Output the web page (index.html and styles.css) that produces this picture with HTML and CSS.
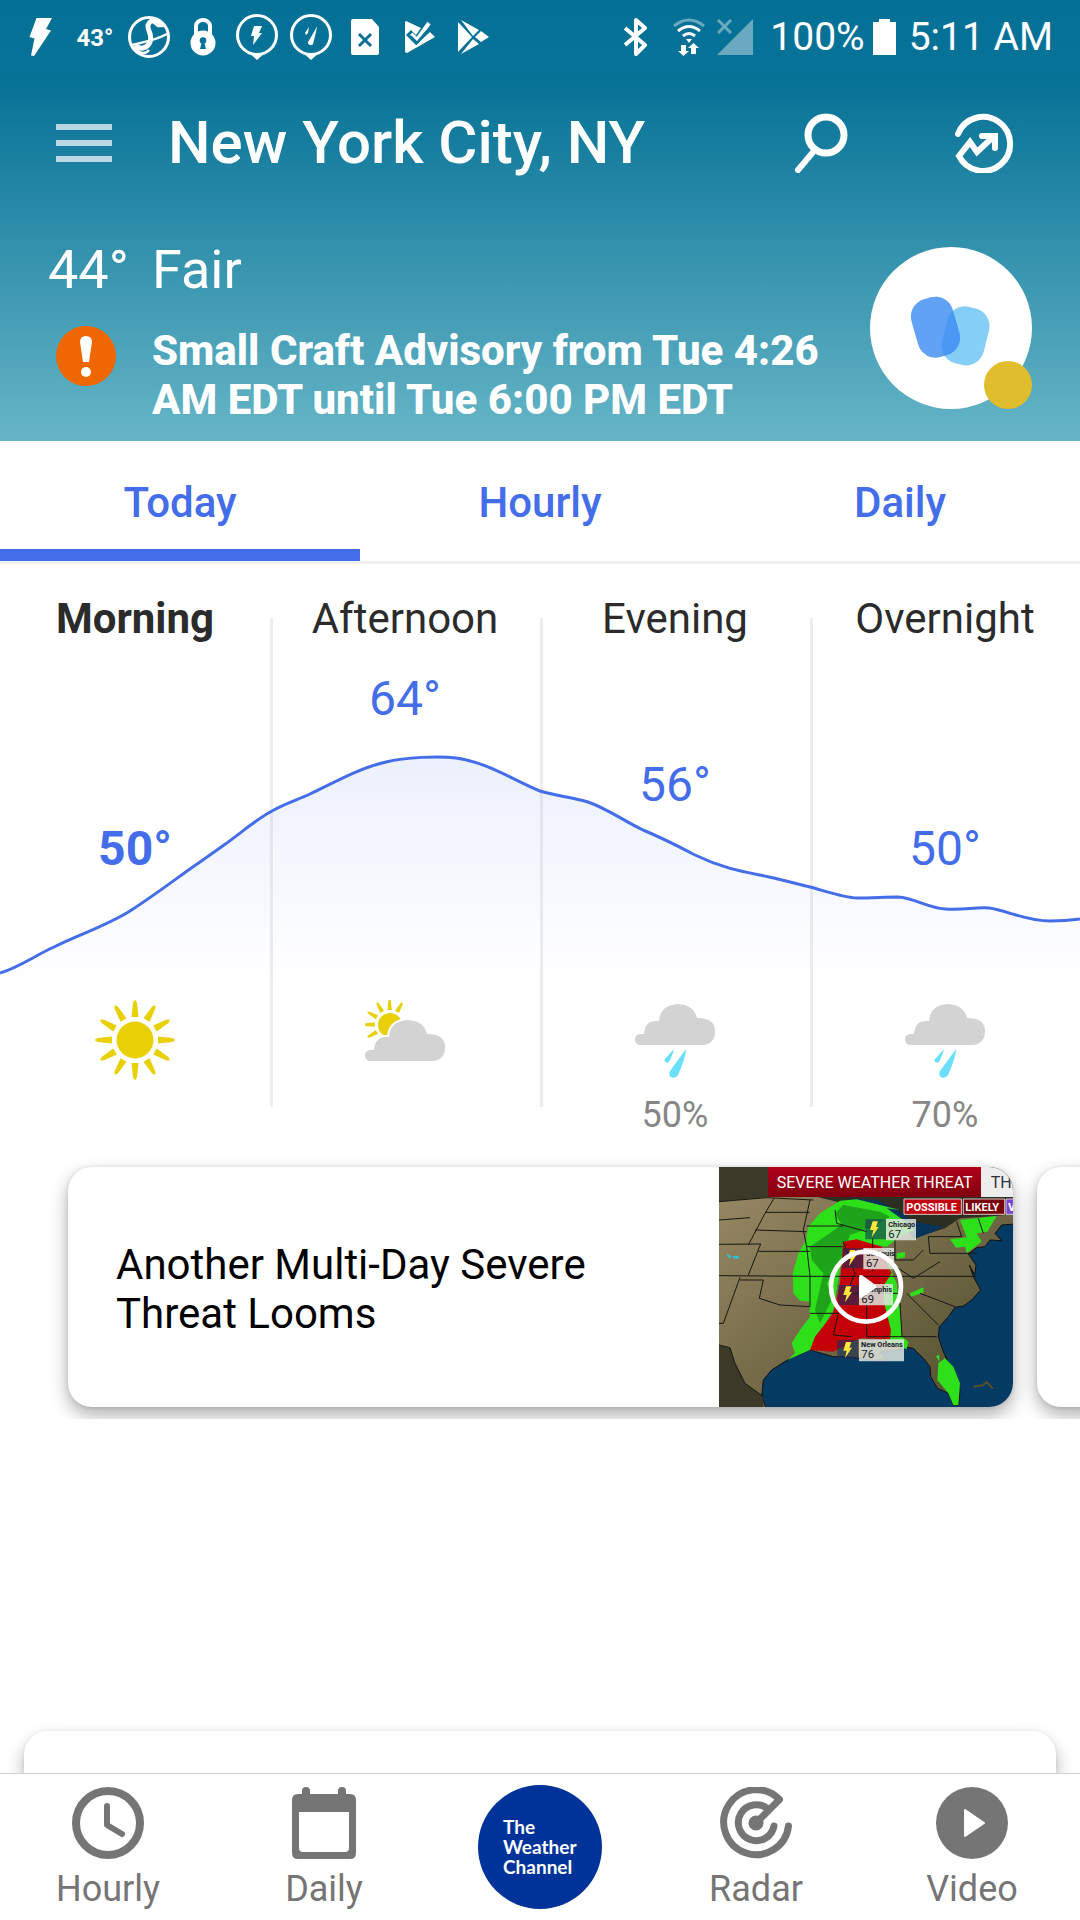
FILE: index.html
```html
<!DOCTYPE html>
<html lang="en">
<head>
<meta charset="utf-8">
<meta name="viewport" content="width=device-width, initial-scale=1">
<title>New York City, NY</title>
<link rel="stylesheet" href="styles.css">
</head>
<body>
<header class="hero">
  <div class="status">
    <div class="status-left">
      <svg class="slot" viewBox="0 0 54 72" fill="#fff"><path d="M22.500 18H38L32 29L37 30.500L20 56L17 55.500L20.500 38.500L15.500 37Z"/></svg>
      <span class="slot status-temp">43°</span>
      <svg class="slot" viewBox="0 0 54 72" fill="none" stroke="#fff"><circle cx="27" cy="37" r="19.500" stroke-width="3"/><path d="M38 26c2-6-10-8-12-1c-1 6 5 9 2 17c-3 7-11 8-14 3" stroke-width="5"/><path d="M31 22l5 4l7 0M10 45c11-3 22-4 35-11M13 46c3 8 10 9 14 4" stroke-width="2.500"/></svg>
      <svg class="slot" viewBox="0 0 54 72"><path d="M20 35V26a7 6 0 0 1 14 0v9" fill="none" stroke="#fff" stroke-width="4"/><circle cx="27" cy="43" r="12.500" fill="#fff"/><circle cx="27" cy="40.500" r="3.300" fill="#067196"/><path d="M26 41h2l2 8h-6z" fill="#067196"/></svg>
      <svg class="slot" viewBox="0 0 54 72"><circle cx="27" cy="35" r="19.500" fill="none" stroke="#fff" stroke-width="3"/><path d="M18 52q9 4 18 0l-9 8z" fill="#fff"/><path d="M24 26h8l-3 7h3l-9 12l1-9h-3z" fill="#fff"/></svg>
      <svg class="slot" viewBox="0 0 54 72"><circle cx="27" cy="35" r="19.500" fill="none" stroke="#fff" stroke-width="3"/><path d="M18 52q9 4 18 0l-9 8z" fill="#fff"/><path d="M33 26l-1 6l-3 12c-1 2-6 1-5-2l6-10zM25 27l-1 6l-2 2l-1-2z" fill="#fff"/></svg>
      <svg class="slot" viewBox="0 0 54 72"><path d="M15 19h19l7 8v26q0 2-2 2H15q-2 0-2-2V21q0-2 2-2z" fill="#fff"/><path d="M21 34l12 12M33 34l-12 12" stroke="#067196" stroke-width="3"/></svg>
      <svg class="slot" viewBox="0 0 54 72"><path d="M14 21l15 7l-5 7l-5-5l-5 5l10 10l14-13l5 5L15 53q-2 0-2-2V22z" fill="#fff"/><path d="M19 34l6 6l12-17" fill="none" stroke="#fff" stroke-width="4"/><path d="M18 36l7 7l10-12" fill="none" stroke="#067196" stroke-width="2.500"/></svg>
      <svg class="slot" viewBox="0 0 54 72" fill="#fff"><path d="M12 22l14 15l-14 15zM15 20l18 10l-6 6zM35 31l8 6l-8 5l-6-5zM27 39l6 5l-18 10z"/></svg>
    </div>
    <div class="status-right">
      <svg width="23" height="38" viewBox="0 0 23 38" fill="none" stroke="#fff" stroke-width="4" stroke-linejoin="round"><path d="M1 10l20 17l-9 9V2l9 8L1 27"/></svg>
      <svg class="wifi" width="32" height="38" viewBox="0 0 32 38" fill="none" stroke="#fff" stroke-width="3"><path d="M1 8q15-12 30 0" opacity=".4"/><path d="M5 13q11-9 22 0M10 18q6-5 12 0"/><path d="M13 21h6l-3 4z" fill="#fff" stroke="none"/><path d="M8 27h5v6h3l-5.500 5L5 33h3zM18 36h5v-6h3l-5.500-5L15 30h3z" fill="#fff" stroke="none"/></svg>
      <svg class="signal" width="36" height="36" viewBox="0 0 36 36"><path d="M36 0v36H0z" fill="#6ba9c0"/><path d="M1 1l13 13M14 1L1 14" stroke="#6ba9c0" stroke-width="3"/></svg>
      <span class="battery-text">100%</span>
      <svg class="battery" width="23" height="36" viewBox="0 0 23 36" fill="#fff"><path d="M0 3h6V0h11v3h6v33H0z"/></svg>
      <span class="clock">5:11 AM</span>
    </div>
  </div>

  <div class="toolbar">
    <button class="icon-button menu" aria-label="Menu"><span></span><span></span><span></span></button>
    <h1 class="place">New York City, NY</h1>
    <button class="icon-button" aria-label="Search"><svg width="60" height="60" viewBox="0 0 60 60" fill="none" stroke="#fff" stroke-linecap="round"><circle cx="36" cy="22" r="18" stroke-width="7"/><path d="M24 38L8 57" stroke-width="6"/></svg></button>
    <button class="icon-button" aria-label="Trending"><svg width="60" height="60" viewBox="0 0 60 60" fill="none" stroke="#fff" stroke-width="6" stroke-linecap="round"><path d="M4 21A27 27 0 1 1 5 43L16 29L23 39L39 24M28 23H41V35"/></svg></button>
  </div>

  <section class="conditions">
    <p class="now">44°</p>
    <p class="sky">Fair</p>
    <svg class="alert-icon" width="60" height="60" viewBox="0 0 60 60"><circle cx="30" cy="30" r="30" fill="#ee6700"/><path d="M24 16q0-6 6-6t6 6l-3 20h-6z" fill="#fff"/><circle cx="30" cy="46" r="5" fill="#fff"/></svg>
    <a class="alert" href="#alert">Small Craft Advisory from Tue 4:26 AM EDT until Tue 6:00 PM EDT</a>
    <button class="assistant" aria-label="Assistant"><svg width="162" height="162" viewBox="0 0 162 162"><circle cx="81" cy="81" r="81" fill="#fff"/><rect x="74" y="60" width="43" height="58" rx="18" fill="#85cef6" transform="rotate(14 96 89)"/><rect x="44" y="50" width="43" height="60" rx="18" fill="#3b8bf4" fill-opacity=".8" transform="rotate(-16 66 80)"/><circle cx="138" cy="138" r="24" fill="#dfbd2c"/></svg></button>
  </section>
</header>

<nav class="tabs" aria-label="Forecast range">
  <button class="tab tab-active">Today</button>
  <button class="tab">Hourly</button>
  <button class="tab">Daily</button>
</nav>

<main>
  <section class="forecast" aria-label="Today">
    <svg class="curve" viewBox="0 0 1080 576" preserveAspectRatio="none" aria-hidden="true">
      <defs>
        <linearGradient id="fade" x1="0" y1="190" x2="0" y2="425" gradientUnits="userSpaceOnUse"><stop offset="0" stop-color="#446dea" stop-opacity=".1"/><stop offset="1" stop-color="#446dea" stop-opacity="0"/></linearGradient>
      </defs>
      <path fill="url(#fade)" d="M0 409C18 404 36 391 54 383C78 371 106 362 130 347C158 329 178 313 200 298L224 281C240 270 255 256 272 247C284 240 297 236 310 230C335 218 362 203 386 198C405 193 440 192 456 194C487 198 517 218 540 227C556 232 573 233 588 238C606 244 624 257 643 266C660 273 676 281 695 291C730 308 755 309 778 315L810 323C825 327 845 334 857 334C872 334 885 333 898 333C915 334 930 345 946 345C965 346 975 343 989 344C1006 346 1025 357 1050 357Q1065 357 1080 355V425H0Z"/>
      <path class="curve-line" d="M0 409C18 404 36 391 54 383C78 371 106 362 130 347C158 329 178 313 200 298L224 281C240 270 255 256 272 247C284 240 297 236 310 230C335 218 362 203 386 198C405 193 440 192 456 194C487 198 517 218 540 227C556 232 573 233 588 238C606 244 624 257 643 266C660 273 676 281 695 291C730 308 755 309 778 315L810 323C825 327 845 334 857 334C872 334 885 333 898 333C915 334 930 345 946 345C965 346 975 343 989 344C1006 346 1025 357 1050 357Q1065 357 1080 355"/>
    </svg>
    <div class="period period-current">
      <h2>Morning</h2>
      <p class="temp" style="margin-top: 178px">50°</p>
      <svg class="weather" width="80" height="80" viewBox="0 0 80 80" fill="#e8d007"><defs><path id="ray" d="M36.500 17L38 3Q40-3 42 3L43.500 17Z"/></defs><circle cx="40" cy="40" r="18.500"/><use href="#ray"/><use href="#ray" transform="rotate(30 40 40)"/><use href="#ray" transform="rotate(60 40 40)"/><use href="#ray" transform="rotate(90 40 40)"/><use href="#ray" transform="rotate(120 40 40)"/><use href="#ray" transform="rotate(150 40 40)"/><use href="#ray" transform="rotate(180 40 40)"/><use href="#ray" transform="rotate(210 40 40)"/><use href="#ray" transform="rotate(240 40 40)"/><use href="#ray" transform="rotate(270 40 40)"/><use href="#ray" transform="rotate(300 40 40)"/><use href="#ray" transform="rotate(330 40 40)"/></svg>
      <p class="chance"></p>
    </div>
    <div class="period">
      <h2>Afternoon</h2>
      <p class="temp" style="margin-top: 28px">64°</p>
      <svg class="weather" width="80" height="80" viewBox="0 0 80 80"><defs><path id="cloud" d="M5 41a5 5.500 0 0 1 0-11h4q1-13 12-13h3q1-16 19-17q16 1 19 14q18 0 18 13t-12 14z"/></defs><g fill="#e8d007"><circle cx="25" cy="25" r="12"/><g transform="translate(-1 -1) scale(.64)"><use href="#ray"/><use href="#ray" transform="rotate(30 40 40)"/><use href="#ray" transform="rotate(240 40 40)"/><use href="#ray" transform="rotate(270 40 40)"/><use href="#ray" transform="rotate(300 40 40)"/><use href="#ray" transform="rotate(330 40 40)"/></g></g><g transform="translate(0 20)"><use href="#cloud" fill="#d3d3d3" stroke="#fff" stroke-width="4"/><use href="#cloud" fill="#d3d3d3"/></g></svg>
      <p class="chance"></p>
    </div>
    <div class="period">
      <h2>Evening</h2>
      <p class="temp" style="margin-top: 114px">56°</p>
      <svg class="weather" width="80" height="80" viewBox="0 0 80 80"><use href="#cloud" fill="#d3d3d3" y="4"/><path id="rain" d="M51 49q0 8-8 26c-3 5-11 3-8-4zM39 49q-1 5-4 11c-2 5-7 2-5-1z" fill="#69dffc"/></svg>
      <p class="chance">50%</p>
    </div>
    <div class="period">
      <h2>Overnight</h2>
      <p class="temp" style="margin-top: 178px">50°</p>
      <svg class="weather" width="80" height="80" viewBox="0 0 80 80"><use href="#cloud" fill="#d3d3d3" y="4"/><use href="#rain"/></svg>
      <p class="chance">70%</p>
    </div>
  </section>

  <section class="stories" aria-label="Top stories">
    <a class="story" href="#story">
      <span class="story-title">Another Multi-Day Severe Threat Looms</span>
      <svg class="story-map" viewBox="57 51 882 720" preserveAspectRatio="xMidYMid slice" role="img" aria-label="Severe weather threat map">
        <defs>
          <linearGradient id="land" x1="0" y1="0" x2="1" y2="1"><stop offset="0" stop-color="#9c8c68"/><stop offset=".5" stop-color="#756b49"/><stop offset="1" stop-color="#4c4a2a"/></linearGradient>
          <linearGradient id="banner" x1="0" y1="0" x2="0" y2="1"><stop offset="0" stop-color="#b3001a"/><stop offset="1" stop-color="#80000f"/></linearGradient>
          <path id="flash" d="M10 0h16l-6 17h8L7 48l5-22H2z" fill="#ffe63b"/>
        </defs>
        <path fill="#053a63" d="M57 51h882v720H57z"/>
        <path fill="url(#land)" stroke="#111" stroke-width="3" d="M50 40H945V222L905 225L885 250L905 272L870 270L855 290L830 293L805 312L828 345L824 375L808 345L820 380L842 420L815 450L790 468L765 472L745 500L718 530L715 560L728 600L745 640L770 680L780 720L776 765L760 765L745 730L712 715L692 680L690 650L670 625L640 595L605 590L600 600L540 605L560 630L520 630L440 620L400 620L330 600L270 625L215 660L190 690L185 740L200 780H50Z"/>
        <path fill="#3d3929" d="M57 585L90 593L105 640L135 700L190 740V771H57zM57 51H210V141L57 155z"/>
        <path fill="#2c2e22" d="M350 140H939V190L900 197L780 205L735 235L640 265L590 200z"/>
        <path fill="#08345a" d="M440 145L530 150L600 185L640 215L730 230L700 245L640 268L620 235L585 195L540 190L520 165zM516 205L545 185L550 250L525 268L505 240z"/>
        <g fill="#2ee01a"><path d="M470 148L420 152L360 190L325 230L318 270L295 310L278 370L280 430L300 452L328 455L330 500L300 540L275 580L285 610L262 630L330 600L400 480L430 300L440 270L560 290L600 260L645 240L610 210L560 175L600 180Z"/><path d="M560 330L590 400L600 480L606 560L625 575L620 597L560 580L550 440Z"/><path d="M715 640L735 625L760 650L780 700L775 765L760 765L745 730L712 690ZM708 618l10-4v22zM780 210L890 198L862 245L830 250L845 275L800 310L795 290L768 293L750 268L800 262ZM590 310l25-4v16l-25 4zM630 430l40-18v16l-38 12z"/></g>
        <path fill="#1fa31b" d="M430 165L540 185L570 200L505 235L450 255L425 320L380 400L400 440L360 520L345 480L370 370L335 330L330 290L425 225L405 190Z"/>
        <path fill="#c40009" d="M430 275L470 268L545 290L560 340L575 370L555 400L550 450L573 540L570 568L480 565L400 605L330 600L345 560L400 490L420 400Z"/>
        <g fill="none" stroke="#171712" stroke-width="3"><path d="M222 145L195 190L145 285M57 155L200 143L340 150M57 210L150 203M195 187H330M165 240L320 245M320 228H430M57 283L182 282L145 375M175 304H330M57 377L330 379H830M120 382L70 520H57M120 390H190L178 445L240 465L330 470V379L320 290L310 240L330 150M320 290H430M330 490H415L400 555L455 560M405 180L410 220L500 245M430 275L465 370L440 430H610M518 265V365M585 265V330M500 400V560H710M580 345L640 385L720 335M685 260L690 310H830M585 330L640 330L670 300M770 215L785 260H685M600 460L606 560M620 430L715 525M660 430L765 470M57 585L90 593L105 640L135 700L190 740M835 205L850 250"/></g>
        <path d="M80 310l12 8v8l-8-4zM98 318h18v8h-14z" fill="#23c5dd"/>
        <path d="M820 710l28-4 12-10 18 20" fill="none" stroke="#57502d" stroke-width="6"/>
        <path fill="#16305a" fill-opacity=".6" d="M496 208h62v60h-62zM428 295h62v60h-62zM415 405h62v60h-62zM412 570h62v60h-62z"/>
        <g fill="#dfe5df" fill-opacity=".85"><path d="M558 207h90v64h-90zM490 294h92v64h-92zM477 402h102v64H477zM477 568h135v66H477z"/></g>
        <use href="#flash" x="508" y="214"/><use href="#flash" x="440" y="300"/><use href="#flash" x="428" y="409"/><use href="#flash" x="428" y="576"/>
        <g class="city"><text x="565" y="231">Chicago</text><text x="498" y="319">St. Louis</text><text x="484" y="426">Memphis</text><text x="483" y="592">New Orleans</text></g>
        <g class="degrees"><text x="565" y="264">67</text><text x="498" y="351">67</text><text x="484" y="459">69</text><text x="484" y="625">76</text></g>
        <path fill="url(#banner)" d="M204 51h640v90H204z"/><path fill="#ededed" d="M843 51h100v90H843z"/>
        <text class="banner" x="230" y="115">SEVERE WEATHER THREAT</text>
        <text class="banner banner-day" x="872" y="115">THU</text>
        <g stroke="#d8c8c8" stroke-width="3"><path fill="#c2000d" d="M612 147h172v46H612z"/><path fill="#790009" d="M790 147h124v46H790z"/><path fill="#7747d8" d="M918 147h40v46h-40z"/></g>
        <g class="legend"><text x="619" y="183">POSSIBLE</text><text x="796" y="183">LIKELY</text><text x="924" y="183">V</text></g>
        <circle cx="498" cy="410" r="105" fill="none" stroke="#fff" stroke-width="14"/>
        <path fill="#fff" d="M477 382q0-10 9-6l40 28q6 6 0 11l-40 28q-9 4-9-6z"/>
      </svg>
    </a>
    <div class="story" aria-hidden="true"></div>
  </section>
  <div class="ad-slot"></div>
  <section class="next-card"></section>
</main>

<nav class="bottom" aria-label="Sections">
  <a href="#hourly"><svg width="72" height="72" viewBox="0 0 72 72" fill="none" stroke="#757575" stroke-linecap="round" stroke-linejoin="round"><circle cx="36" cy="36" r="32" stroke-width="8"/><path d="M35 19V38L50 47" stroke-width="6"/></svg>Hourly</a>
  <a href="#daily"><svg width="72" height="72" viewBox="0 0 72 72"><path fill="#757575" fill-rule="evenodd" d="M10 7h4V4a4 4 0 0 1 8 0v3h28V4a4 4 0 0 1 8 0v3h4q6 0 6 6v53q0 6-6 6H10q-6 0-6-6V13q0-6 6-6zM11 25v36q0 4 4 4h42q4 0 4-4V25z"/></svg>Daily</a>
  <a class="brand" href="#home"><span class="logo">The<br>Weather<br>Channel</span></a>
  <a href="#radar"><svg width="72" height="72" viewBox="0 0 72 72" fill="none" stroke="#757575" stroke-width="7" stroke-linecap="round" stroke-linejoin="round"><path d="M36 36L59.500 12.500A32.500 32.500 0 1 0 68.500 39M48 22A18 18 0 1 0 54 39"/><circle cx="36" cy="36" r="4"/></svg>Radar</a>
  <a href="#video"><svg width="72" height="72" viewBox="0 0 72 72"><circle cx="36" cy="36" r="36" fill="#757575"/><path fill="#fff" stroke="#fff" stroke-width="2" stroke-linejoin="round" d="M29 23V49L48 36z"/></svg>Video</a>
</nav>
</body>
</html>
```
FILE: styles.css
```css
* {
  box-sizing: border-box;
}

body {
  margin: 0;
  min-height: 100vh;
  display: flex;
  flex-direction: column;
  background: #fff;
  color: #000;
  font-family: Roboto, "Liberation Sans", sans-serif;
  font-size: 42px;
  line-height: 49px;
}

h1, h2, p {
  margin: 0;
  font: inherit;
}

button {
  padding: 0;
  border: 0;
  background: none;
  font: inherit;
  color: inherit;
}

a {
  color: inherit;
  text-decoration: none;
}

svg {
  display: block;
}

/* Header */
.hero {
  color: #fff;
  background: linear-gradient(#047095 72px, #66b5c6);
}

.status {
  display: flex;
  justify-content: space-between;
  height: 72px;
  padding: 0 27px 0 14px;
  background: linear-gradient(#047095, #087398);
}

.status-left,
.status-right {
  display: flex;
  align-items: center;
}

.slot {
  width: 54px;
  height: 72px;
}

.status-temp {
  font-size: 24px;
  font-weight: 700;
  line-height: 76px;
  text-align: center;
}

.status-right {
  font-size: 39px;
  padding-top: 2px;
}

.wifi {
  margin-left: 26px;
}

.signal {
  margin: 0 17px 0 12px;
}

.battery {
  margin: 0 13px 0 8px;
}

.toolbar {
  display: flex;
  align-items: center;
  height: 142px;
  padding: 0 66px 0 56px;
}

.menu {
  display: flex;
  flex-direction: column;
  gap: 10px;
  width: 56px;
  margin-right: 56px;
}

.menu span {
  height: 6px;
  background: rgba(255, 255, 255, .7);
}

.place {
  flex: 1;
  font-size: 60px;
  font-weight: 500;
  line-height: 70px;
}

.icon-button + .icon-button {
  margin-left: 104px;
}

.conditions {
  display: grid;
  grid-template-columns: 104px 1fr 162px;
  row-gap: 24px;
  padding: 24px 48px 17px;
}

.now,
.sky {
  font-size: 54px;
  line-height: 64px;
}

.alert-icon {
  grid-row: 2;
  margin-left: 8px;
}

.alert {
  grid-row: 2;
  font-weight: 800;
}

.assistant {
  grid-column: 3;
  grid-row: 1 / 3;
  align-self: start;
  margin-top: 9px;
}

/* Range tabs */
.tabs {
  display: flex;
  border-bottom: 3px solid #f0f0f0;
}

.tab {
  flex: 1;
  padding: 37px 0 22px;
  border-bottom: 12px solid transparent;
  font-weight: 500;
  color: #446dea;
}

.tab-active {
  border-color: #446dea;
}

main {
  flex: 1;
  display: flex;
  flex-direction: column;
  overflow: hidden;
}

/* Day-part forecast */
.forecast {
  position: relative;
  display: grid;
  grid-template-columns: repeat(4, 1fr);
}

.curve {
  position: absolute;
  inset: 0;
  width: 100%;
  height: 100%;
}

.curve-line {
  fill: none;
  stroke: #446dea;
  stroke-width: 3px;
}

.period {
  display: flex;
  flex-direction: column;
  align-items: center;
  height: 576px;
  padding: 30px 0 4px;
  color: #2b2b2b;
}

.period + .period {
  background: linear-gradient(#ededed, #ededed) 0 54px / 3px 489px no-repeat;
}

.period-current {
  font-weight: 700;
}

.temp {
  font-size: 48px;
  line-height: 56px;
  color: #446dea;
}

.weather {
  margin-top: auto;
}

.chance {
  height: 42px;
  margin-top: 14px;
  font-size: 36px;
  line-height: 42px;
  color: #868686;
}

/* Story carousel */
.stories {
  display: flex;
  gap: 24px;
  padding: 27px 0 12px 68px;
  overflow: hidden;
}

.story {
  flex: 0 0 calc(100% - 67px);
  display: flex;
  align-items: center;
  height: 240px;
  border-radius: 24px;
  background: #fff;
  box-shadow: 0 8px 18px rgba(0, 0, 0, .32), 0 0 4px rgba(0, 0, 0, .1);
}

.story-title {
  flex: 1;
  padding: 4px 120px 0 48px;
}

.story-map {
  width: 294px;
  height: 240px;
  border-radius: 0 24px 24px 0;
}

.story-map text {
  font-size: 22px;
  font-weight: 700;
  fill: #14191f;
}

.story-map .degrees text {
  font-size: 34px;
  font-weight: 400;
}

.story-map .banner {
  font-size: 48px;
  font-weight: 400;
  fill: #fff;
}

.story-map .banner-day {
  fill: #2b3238;
}

.story-map .legend text {
  font-size: 33px;
  fill: #fff;
}

.ad-slot {
  height: 312px;
}

.next-card {
  flex: 1;
  min-height: 42px;
  margin: 0 24px;
  border-radius: 24px 24px 0 0;
  box-shadow: 0 10px 18px rgba(0, 0, 0, .32), 0 0 4px rgba(0, 0, 0, .06);
}

/* Bottom navigation */
.bottom {
  position: sticky;
  bottom: 0;
  display: grid;
  grid-template-columns: repeat(5, 1fr);
  border-top: 1px solid #d0d0d0;
  background: #fff;
  color: #757575;
  font-size: 36px;
  line-height: 42px;
}

.bottom a {
  display: flex;
  flex-direction: column;
  align-items: center;
  gap: 9px;
  padding: 13px 0 10px;
}

.bottom .brand {
  padding: 11px 0;
}

.logo {
  width: 124px;
  height: 124px;
  padding: 32px 0 0 25px;
  border-radius: 50%;
  background: #003399;
  color: #fff;
  font-family: Lato, "Liberation Sans", sans-serif;
  font-size: 19px;
  font-weight: 700;
  line-height: 20px;
}
```
